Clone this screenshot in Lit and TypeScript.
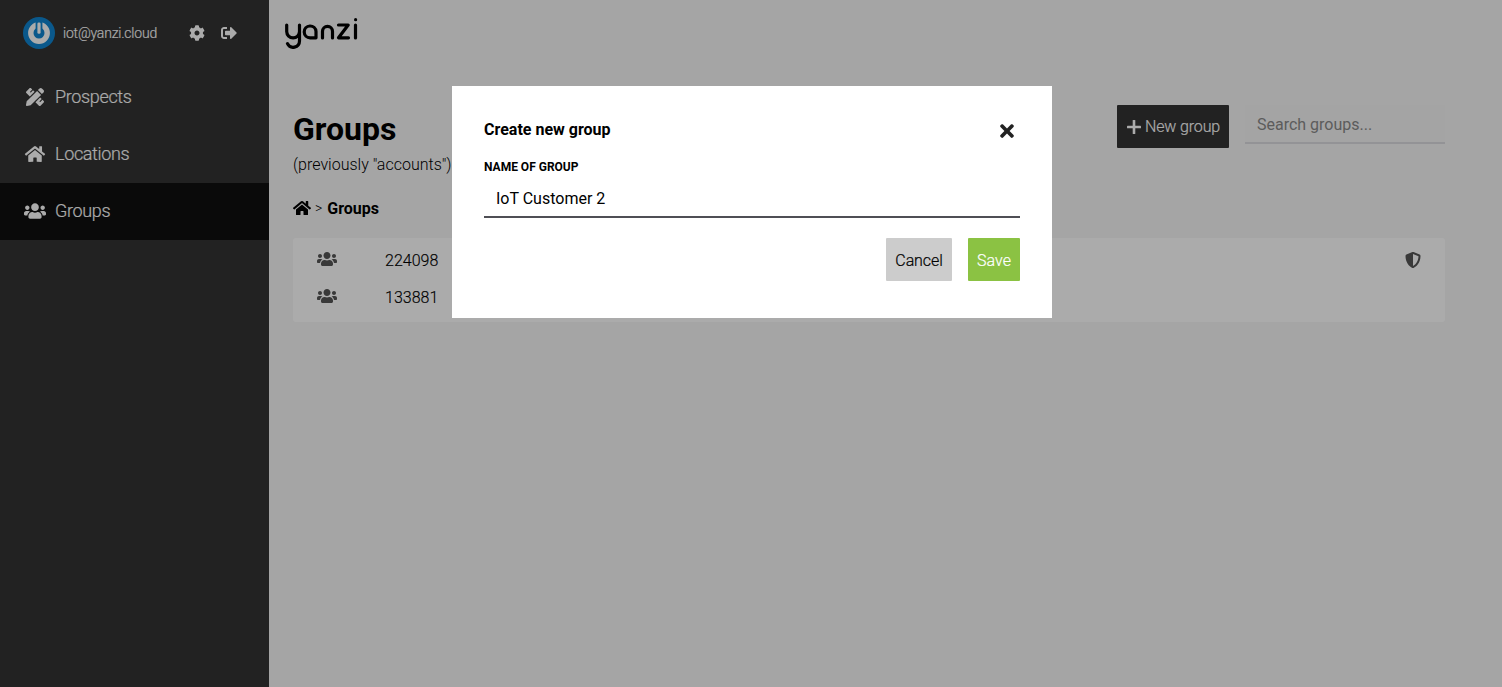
import { LitElement, html, css, svg } from "lit";
import { customElement } from "lit/decorators.js";

const icon = (vb: string, d: string, cls: string) =>
  html`<svg class=${cls} viewBox=${vb} fill="currentColor" aria-hidden="true">${svg`<path d=${d}></path>`}</svg>`;

const HOME = "M280.37 148.26L96 300.11V464a16 16 0 0 0 16 16l112.06-.29a16 16 0 0 0 15.92-16V368a16 16 0 0 1 16-16h64a16 16 0 0 1 16 16v95.64a16 16 0 0 0 16 16.05L464 480a16 16 0 0 0 16-16V300L295.67 148.26a12.19 12.19 0 0 0-15.3 0zM571.6 251.47L488 182.56V44.05a12 12 0 0 0-12-12h-56a12 12 0 0 0-12 12v72.61L318.47 43a48 48 0 0 0-61 0L4.34 251.47a12 12 0 0 0-1.6 16.9l25.5 31A12 12 0 0 0 45.15 301l235.22-193.74a12.19 12.19 0 0 1 15.3 0L530.9 301a12 12 0 0 0 16.9-1.6l25.5-31a12 12 0 0 0-1.7-16.93z";
const USERS = "M96 224c35.3 0 64-28.7 64-64s-28.7-64-64-64-64 28.7-64 64 28.7 64 64 64zm448 0c35.3 0 64-28.7 64-64s-28.7-64-64-64-64 28.7-64 64 28.7 64 64 64zm32 32h-64c-17.6 0-33.5 7.1-45.1 18.6 40.3 22.1 68.9 62 75.1 109.4h66c17.7 0 32-14.3 32-32v-32c0-35.3-28.7-64-64-64zm-256 0c61.9 0 112-50.1 112-112S381.9 32 320 32 208 82.1 208 144s50.1 112 112 112zm76.8 32h-8.3c-20.8 10-43.9 16-68.5 16s-47.6-6-68.5-16h-8.3C179.6 288 128 339.6 128 403.2V432c0 26.5 21.5 48 48 48h288c26.5 0 48-21.5 48-48v-28.8c0-63.6-51.6-115.2-115.2-115.2zm-223.7-13.4C161.5 263.1 145.6 256 128 256H64c-35.3 0-64 28.7-64 64v32c0 17.7 14.3 32 32 32h65.9c6.3-47.4 34.9-87.3 75.2-109.4z";
const COG = "M487.4 315.7l-42.6-24.6c4.3-23.2 4.3-47 0-70.2l42.6-24.6c4.9-2.8 7.1-8.6 5.5-14-11.1-35.6-30-67.8-54.7-94.6-3.8-4.1-10-5.1-14.8-2.3L380.8 110c-17.9-15.4-38.5-27.3-60.8-35.1V25.8c0-5.6-3.9-10.5-9.4-11.7-36.7-8.2-74.3-7.8-109.2 0-5.5 1.2-9.4 6.1-9.4 11.7V75c-22.2 7.9-42.8 19.8-60.8 35.1L88.7 85.5c-4.9-2.8-11-1.9-14.8 2.3-24.7 26.7-43.6 58.9-54.7 94.6-1.7 5.4.6 11.2 5.5 14L67.3 221c-4.3 23.2-4.3 47 0 70.2l-42.6 24.6c-4.9 2.8-7.1 8.6-5.5 14 11.1 35.6 30 67.8 54.7 94.6 3.8 4.1 10 5.1 14.8 2.3l42.6-24.6c17.9 15.4 38.5 27.3 60.8 35.1v49.2c0 5.6 3.9 10.5 9.4 11.7 36.7 8.2 74.3 7.8 109.2 0 5.5-1.2 9.4-6.1 9.4-11.7v-49.2c22.2-7.9 42.8-19.8 60.8-35.1l42.6 24.6c4.9 2.8 11 1.9 14.8-2.3 24.7-26.7 43.6-58.9 54.7-94.6 1.5-5.5-.7-11.3-5.6-14.1zM256 336c-44.1 0-80-35.9-80-80s35.9-80 80-80 80 35.9 80 80-35.9 80-80 80z";
const SIGNOUT = "M497 273L329 441c-15 15-41 4.5-41-17v-96H152c-13.3 0-24-10.7-24-24v-96c0-13.3 10.7-24 24-24h136V88c0-21.4 25.9-32 41-17l168 168c9.3 9.4 9.3 24.6 0 34zM192 436v-40c0-6.6-5.4-12-12-12H96c-17.7 0-32-14.3-32-32V160c0-17.7 14.3-32 32-32h84c6.6 0 12-5.4 12-12V76c0-6.6-5.4-12-12-12H96c-53 0-96 43-96 96v192c0 53 43 96 96 96h84c6.6 0 12-5.4 12-12z";
const TIMES = "M242.72 256l100.07-100.07c12.28-12.28 12.28-32.19 0-44.48l-22.24-22.24c-12.28-12.28-32.19-12.28-44.48 0L176 189.28 75.93 89.21c-12.28-12.28-32.19-12.28-44.48 0L9.21 111.45c-12.28 12.28-12.28 32.19 0 44.48L109.28 256 9.21 356.07c-12.28 12.28-12.28 32.19 0 44.48l22.24 22.24c12.28 12.28 32.2 12.28 44.48 0L176 322.72l100.07 100.07c12.28 12.28 32.2 12.28 44.48 0l22.24-22.24c12.28-12.28 12.28-32.19 0-44.48L242.72 256z";
const SHIELD = "M466.5 83.7l-192-80a48.15 48.15 0 0 0-36.9 0l-192 80C27.7 91.1 16 108.6 16 128c0 198.5 114.5 335.7 221.5 380.3 11.8 4.9 25.1 4.9 36.9 0C360.1 472.6 496 349.3 496 128c0-19.4-11.7-36.9-29.5-44.3zM256.1 446.3l-.1-381 175.9 73.3c-3.3 151.4-82.1 261.1-175.8 307.7z";
const RULER = "M109.46 244.04l134.58-134.56-44.12-44.12-61.68 61.68a7.919 7.919 0 0 1-11.21 0l-11.21-11.21c-3.1-3.1-3.1-8.12 0-11.21l61.68-61.68-33.64-33.65C131.47-3.1 111.39-3.1 99 9.29L9.29 99c-12.38 12.39-12.39 32.47 0 44.86l100.17 100.18zm388.47-116.8c18.76-18.76 18.75-49.17 0-67.93l-45.25-45.25c-18.76-18.76-49.18-18.76-67.95 0l-46.02 46.01 113.2 113.2 46.02-46.03zM316.08 82.71l-297 296.96L.32 487.11c-2.53 14.49 10.09 27.11 24.59 24.56l107.45-18.84L429.28 195.9 316.08 82.71zm186.63 285.43l-33.64-33.64-61.68 61.68c-3.1 3.1-8.12 3.1-11.21 0l-11.21-11.21c-3.09-3.1-3.09-8.12 0-11.21l61.68-61.68-44.14-44.14L267.93 402.5l100.21 100.2c12.39 12.39 32.47 12.39 44.86 0l89.71-89.7c12.39-12.39 12.39-32.47 0-44.86z";

@customElement("app-root")
export class AppRoot extends LitElement {
  static styles = css`
    :host { display: block; height: 687px; overflow: hidden; font-family: Roboto, "Liberation Sans", sans-serif; color: #000; }
    * { box-sizing: border-box; }
    .page { display: flex; height: 687px; background: #f7f7f7; }
    .side { width: 269px; flex: none; background: #333; color: #fff; }
    .user { display: flex; align-items: center; height: 66px; padding-left: 23px; font-size: 14px; font-weight: 300; }
    .avatar { width: 32px; height: 32px; flex: none; margin-right: 8px; }
    .email { width: 126px; letter-spacing: -0.2px; -webkit-text-stroke: 0.15px currentColor; }
    .ico-cog { width: 16px; height: 16px; margin-right: 16px; }
    .ico-out { width: 16px; height: 16px; }
    .nav { margin-top: 3px; }
    .item { display: flex; align-items: center; height: 57px; padding: 0 0 2px 24px; font-size: 18px; font-weight: 300; letter-spacing: -0.35px; -webkit-text-stroke: 0.15px currentColor; }
    .item.on { background: #0f0f0f; }
    .ico-box { width: 31px; display: flex; }
    .ico-pr { width: 22px; height: 18px; }
    .ico-nav { width: 22px; height: 18px; }
    .main { flex: 1; padding: 0 57px 0 24px; min-width: 0; }
    .logo-row { height: 66px; margin-left: -9px; padding-top: 18px; }
    .logo { width: 74px; height: 31px; display: block; }
    .head { display: flex; justify-content: space-between; align-items: flex-start; padding-top: 39px; }
    h1 { margin: 0; font-size: 32px; line-height: 48px; font-weight: 700; height: 48px; }
    .sub { font-size: 16px; font-weight: 300; line-height: 22px; height: 22px; margin-top: 1px; }
    .actions { display: flex; gap: 16px; }
    .new { display: flex; align-items: center; height: 43px; width: 112px; padding-left: 10px; background: #333; color: #fff; font-size: 16px; font-weight: 300; letter-spacing: -0.15px; -webkit-text-stroke: 0.15px currentColor; border-radius: 1px; }
    .ico-plus { width: 14px; height: 14px; margin-right: 4px; }
    .search { width: 200px; height: 39px; padding: 1px 12px 0; display: flex; align-items: center; border-bottom: 2px solid #dcdce0; background: #f5f5f5; color: #8a8a8a; font-size: 16px; font-weight: 400; }
    .crumb { display: flex; align-items: center; height: 22px; margin-top: 21px; font-size: 16px; }
    .ico-home { width: 18px; height: 16px; margin-right: 4px; }
    .crumb span { margin-right: 5px; font-weight: 300; font-size: 14px; }
    .crumb b { font-weight: 700; }
    .card { margin-top: 19px; padding: 4px 0 6px; background: #fff; border-radius: 3px; }
    .row { display: flex; align-items: center; height: 37px; padding: 0 24px; font-size: 16px; font-weight: 300; color: #000; }
    .ico-users { width: 20px; height: 16px; color: #555; margin: 0 48px 3px 0; }
    .num { flex: 1; font-weight: 300; -webkit-text-stroke: 0.15px currentColor; }
    .ico-shield { width: 16px; height: 16px; color: #555; margin-bottom: 2px; }
    .scrim { position: fixed; inset: 0; background: rgba(0,0,0,.33); display: flex; justify-content: center; align-items: flex-start; padding: 86px 0 0 2px; }
    .dialog { width: 600px; height: 232px; padding: 32px; background: #fff; }
    .dh { display: flex; justify-content: space-between; align-items: center; height: 23px; }
    .dh b { font-size: 16px; font-weight: 700; }
    .ico-x { width: 18px; height: 20px; margin: 2px 4px 0 0; color: #222; }
    .label { margin-top: 18px; font-size: 12px; font-weight: 700; line-height: 16px; }
    .input { height: 41px; margin-top: 2px; padding: 3px 12px 0; display: flex; align-items: center; border-bottom: 2px solid #4f4f55; font-size: 16px; }
    .btns { display: flex; justify-content: flex-end; gap: 16px; margin-top: 20px; }
    .btn { height: 43px; display: flex; align-items: center; justify-content: center; padding-top: 1px; font-size: 16px; font-weight: 300; border-radius: 1px; -webkit-text-stroke: 0.2px currentColor; }
    .cancel { width: 66px; background: #ccc; color: #000; letter-spacing: -0.1px; }
    .save { width: 52px; background: #8bc243; color: #fff; }
  `;

  render() {
    return html`
      <div class="page">
        <aside class="side">
          <div class="user">
            <svg class="avatar" viewBox="0 0 32 32" aria-hidden="true">
              <circle cx="16" cy="16" r="16" fill="#1084cf"></circle>
              <circle cx="16" cy="16" r="8.2" fill="none" stroke="#fff" stroke-width="5.4"></circle>
              <rect x="12.6" y="3" width="6.8" height="10" fill="#1084cf"></rect>
              <rect x="14.4" y="5.4" width="3.2" height="11.4" rx="1.4" fill="#fff"></rect>
            </svg>
            <span class="email">iot@yanzi.cloud</span>
            ${icon("0 0 512 512", COG, "ico-cog")}
            ${icon("0 0 512 512", SIGNOUT, "ico-out")}
          </div>
          <nav class="nav">
            <div class="item"><span class="ico-box">${icon("0 0 512 512", RULER, "ico-pr")}</span>Prospects</div>
            <div class="item"><span class="ico-box">${icon("0 0 576 512", HOME, "ico-nav")}</span>Locations</div>
            <div class="item on"><span class="ico-box">${icon("0 0 640 512", USERS, "ico-nav")}</span>Groups</div>
          </nav>
        </aside>
        <main class="main">
          <div class="logo-row">
            <svg class="logo" viewBox="0 0 74 31" fill="none" stroke="#000" stroke-width="3.2" stroke-linecap="round" stroke-linejoin="round" role="img" aria-label="yanzi">
              <path d="M2.7 7v6.5a6.4 6.4 0 0 0 12.8 0V7M15.5 13v10a6.3 6.3 0 0 1-12 2.6"></path>
              <path d="M32 19.8v-6.3a5.9 5.9 0 1 0-5.9 6.3h5.9"></path>
              <path d="M38.5 20v-6.6a5 5 0 0 1 10 0V20"></path>
              <path d="M54.5 7h9.7L54.5 19.8h10"></path>
              <path d="M71.5 7v13"></path>
              <circle cx="71.6" cy="1.7" r="1.6" fill="#000" stroke="none"></circle>
            </svg>
          </div>
          <div class="head">
            <div>
              <h1>Groups</h1>
              <div class="sub">(previously "accounts")</div>
            </div>
            <div class="actions">
              <div class="new">
                <svg class="ico-plus" viewBox="0 0 14 14" fill="currentColor" aria-hidden="true"><rect x="5.7" width="2.6" height="14" rx=".6"></rect><rect y="5.7" width="14" height="2.6" rx=".6"></rect></svg>
                New group
              </div>
              <div class="search">Search groups...</div>
            </div>
          </div>
          <div class="crumb">${icon("0 0 576 512", HOME, "ico-home")}<span>&gt;</span><b>Groups</b></div>
          <div class="card">
            <div class="row">${icon("0 0 640 512", USERS, "ico-users")}<span class="num">224098</span>${icon("0 0 512 512", SHIELD, "ico-shield")}</div>
            <div class="row">${icon("0 0 640 512", USERS, "ico-users")}<span class="num">133881</span></div>
          </div>
        </main>
      </div>
      <div class="scrim">
        <div class="dialog">
          <div class="dh"><b>Create new group</b>${icon("0 0 352 512", TIMES, "ico-x")}</div>
          <div class="label">NAME OF GROUP</div>
          <div class="input">IoT Customer 2</div>
          <div class="btns">
            <div class="btn cancel">Cancel</div>
            <div class="btn save">Save</div>
          </div>
        </div>
      </div>
    `;
  }
}
